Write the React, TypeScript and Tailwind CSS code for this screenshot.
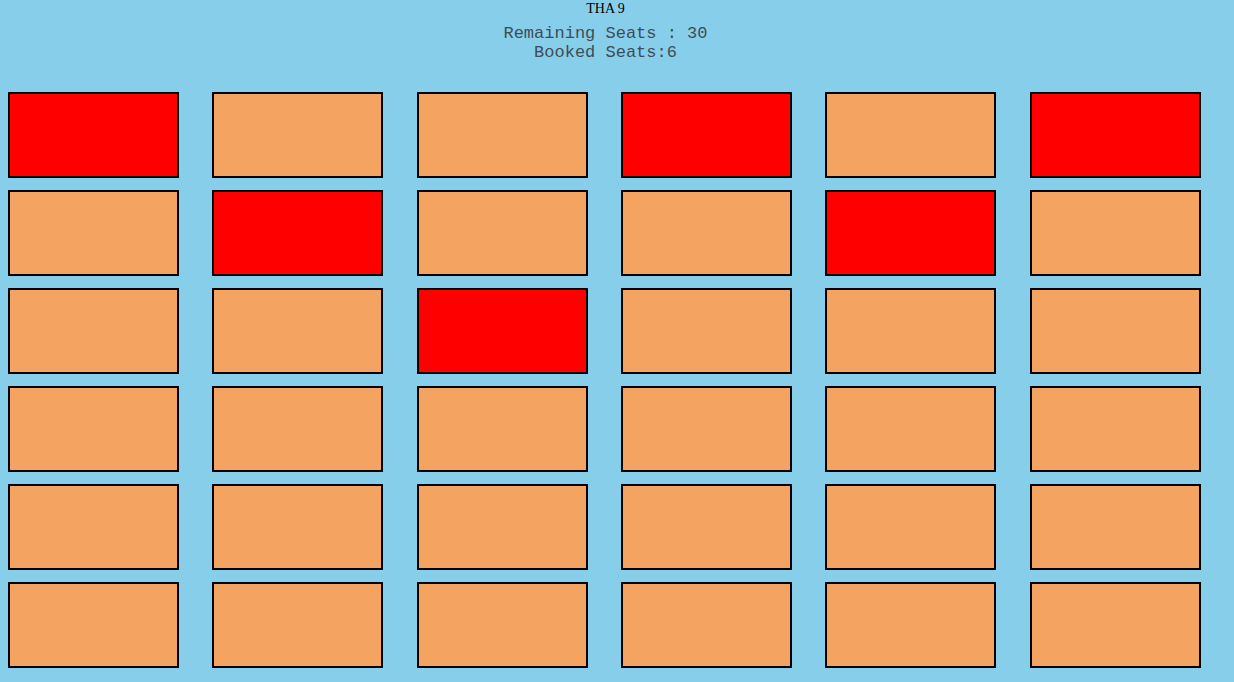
import React from 'react';

const booked = [0, 3, 5, 7, 10, 14];

export default function App() {
  const seats = Array.from({ length: 36 }, (_, i) => i);
  return (
    <div className="min-h-[682px] w-full bg-[#87ceeb]">
      <div className="flex flex-col items-center pr-[23px]">
        <div className="mt-[1px] text-[14px] leading-[16px] text-black" style={{ fontFamily: '"Liberation Serif", serif' }}>
          THA 9
        </div>
        <div
          className="mt-[7px] text-center text-[17px] leading-[19px] text-[#3d4d55]"
          style={{ fontFamily: '"Liberation Mono", monospace' }}
        >
          <div>Remaining Seats : 30</div>
          <div>Booked Seats:6</div>
        </div>
      </div>
      <div className="mt-[30px] grid grid-cols-6 gap-y-[12px] pl-2">
        {seats.map((i) => (
          <div
            key={i}
            className={`h-[86px] w-[171px] border-2 border-black ${
              booked.includes(i) ? 'bg-[#ff0000]' : 'bg-[#f4a460]'
            }`}
          />
        ))}
      </div>
    </div>
  );
}
